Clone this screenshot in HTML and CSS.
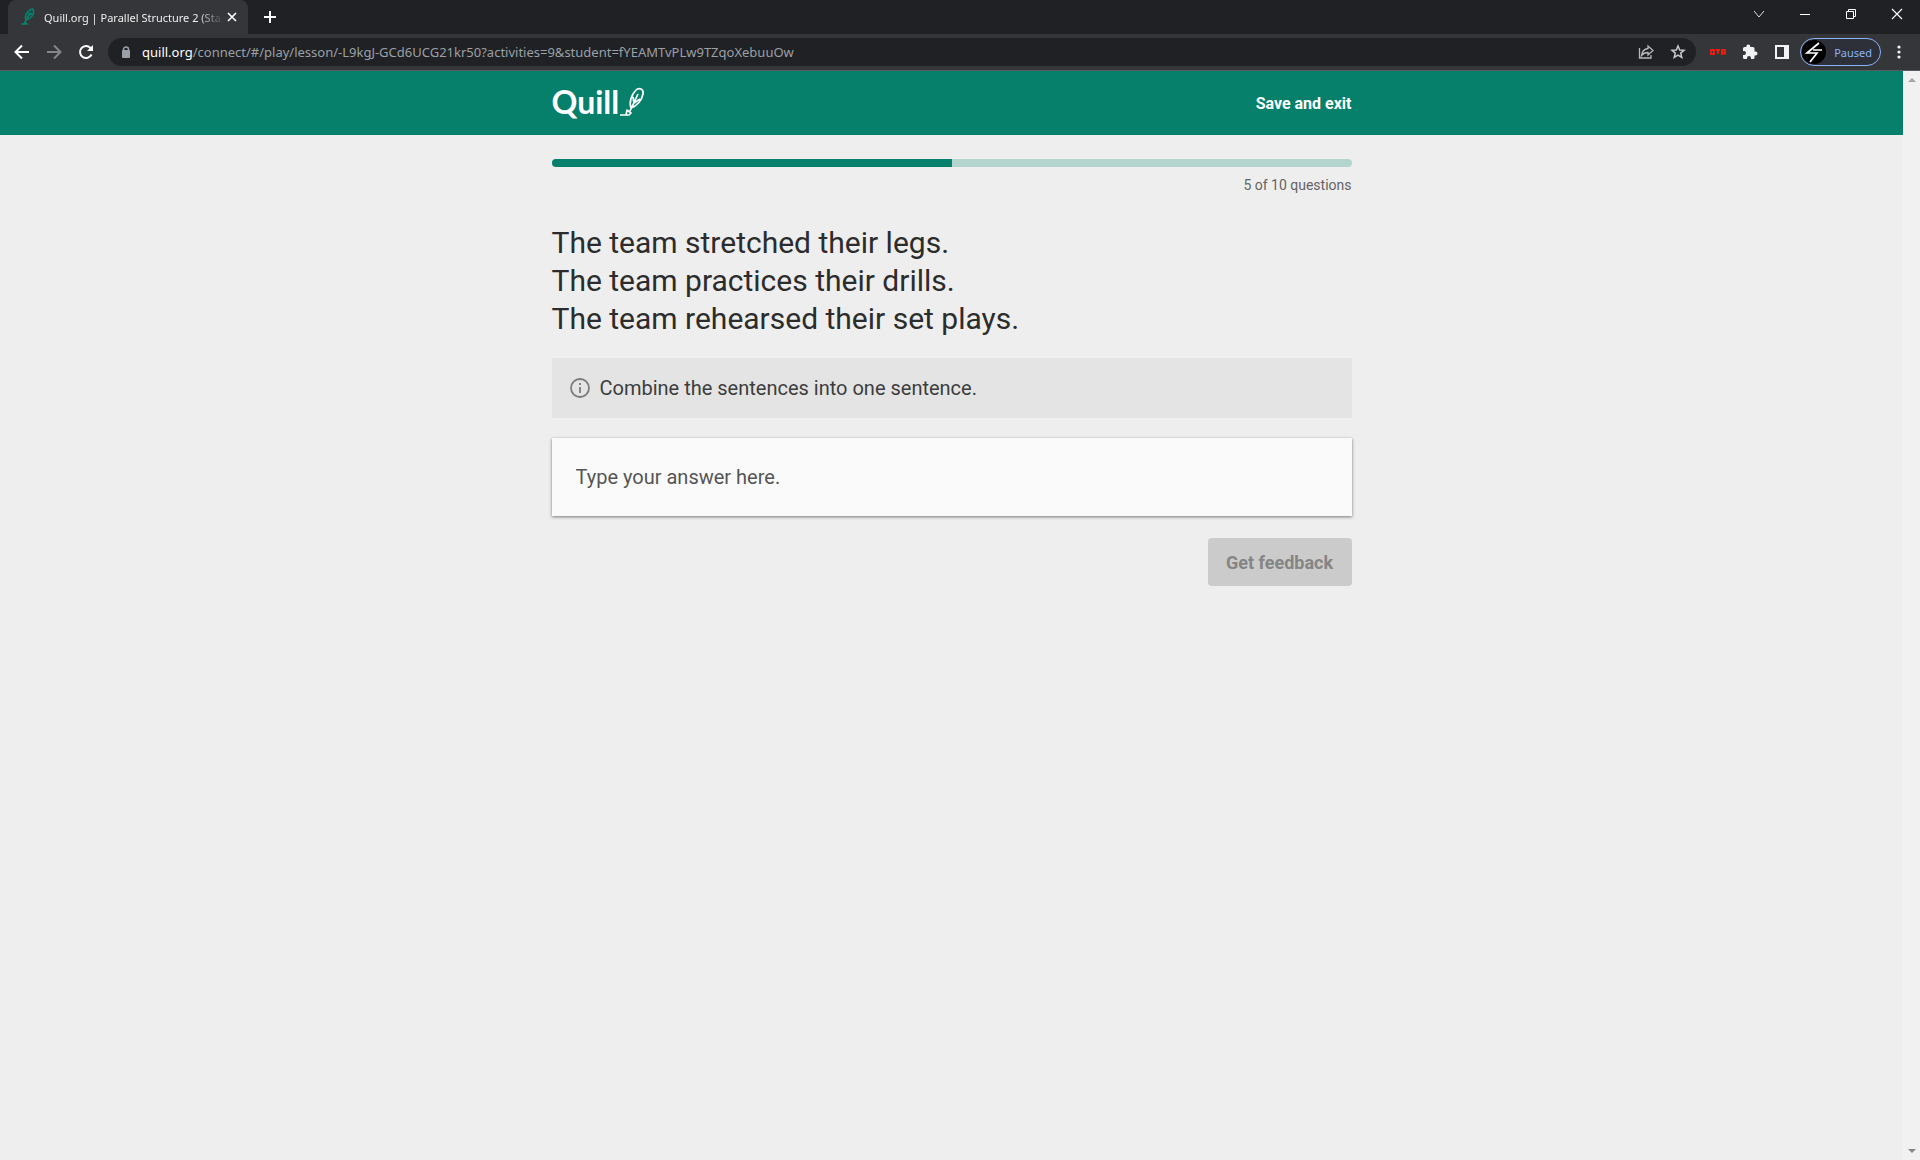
FILE: index.html
```html
<!DOCTYPE html>
<html lang="en">
<head>
	<meta charset="utf-8">
	<meta name="viewport" content="width=device-width, initial-scale=1">
	<title>Quill.org | Parallel Structure 2</title>
	<link rel="stylesheet" href="styles.css">
</head>
<body>
	<div class="tab-strip">
		<div class="tab">
			<svg class="favicon" width="16" height="18" viewBox="0 0 16 18" fill="none" stroke="#08806a" stroke-width="1.5">
				<path d="M6 12C4 8 7 2 13 1C15 6 12 10 6 12ZM11 4L5 14M8 5L9 7L12 6M7 8L8 10M1 16H4L5 14L7 16H4" />
			</svg>
			<span class="tab-title">Quill.org | Parallel Structure 2 (Sta</span>
			<button class="icon-btn tab-close" aria-label="Close tab">
				<svg width="10" height="10" viewBox="0 0 10 10" stroke="#fff" stroke-width="1.700"><path d="M1 1L9 9M9 1L1 9" /></svg>
			</button>
		</div>
		<button class="icon-btn new-tab" aria-label="New tab">
			<svg width="12" height="12" viewBox="0 0 12 12" stroke="#fff" stroke-width="2"><path d="M6 0V12M0 6H12" /></svg>
		</button>
		<div class="window-controls">
			<button class="icon-btn" aria-label="Search tabs">
				<svg width="12" height="12" viewBox="0 0 12 12" fill="none" stroke="#ddd"><path d="M1 3L6 9L11 3" /></svg>
			</button>
			<button class="icon-btn" aria-label="Minimize">
				<svg width="12" height="12" viewBox="0 0 12 12" stroke="#fff"><path d="M1 6.500H11" /></svg>
			</button>
			<button class="icon-btn" aria-label="Restore">
				<svg width="12" height="12" viewBox="0 0 12 12" fill="none" stroke="#fff"><path d="M1.500 3.500H8.500V10.500H1.500ZM3.500 3V1.500H10.500V8.500H9" /></svg>
			</button>
			<button class="icon-btn" aria-label="Close">
				<svg width="12" height="12" viewBox="0 0 12 12" stroke="#fff" stroke-width="1.200"><path d="M1 1L11 11M11 1L1 11" /></svg>
			</button>
		</div>
	</div>

	<div class="toolbar">
		<button class="icon-btn nav-btn" aria-label="Back">
			<svg width="16" height="16" viewBox="0 0 16 16" fill="none" stroke="#fff" stroke-width="2"><path d="M15 8H2M8 1.500L1.500 8L8 14.500" /></svg>
		</button>
		<button class="icon-btn nav-btn" aria-label="Forward">
			<svg width="16" height="16" viewBox="0 0 16 16" fill="none" stroke="#85868a" stroke-width="2"><path d="M1 8H14M8 1.500L14.500 8L8 14.500" /></svg>
		</button>
		<button class="icon-btn nav-btn" aria-label="Reload">
			<svg width="16" height="16" viewBox="0 0 16 16" fill="none" stroke="#fff" stroke-width="2"><path d="M13.500 10.500A6 6 0 1 1 12.500 4L13.500 5.500" /><path d="M15 1V7H9Z" fill="#fff" stroke="none" /></svg>
		</button>
		<div class="address-bar">
			<svg width="10" height="12" viewBox="0 0 10 12" fill="none"><path d="M2.500 5V3.500A2.500 2.500 0 0 1 7.500 3.500V5" stroke="#9aa0a6" stroke-width="1.500" /><rect x="1" y="4" width="8" height="8" rx="1" fill="#9aa0a6" /></svg>
			<span class="url"><b>quill.org</b>/connect/#/play/lesson/-L9kgJ-GCd6UCG21kr50?activities=9&amp;student=fYEAMTvPLw9TZqoXebuuOw</span>
			<button class="icon-btn" aria-label="Share">
				<svg width="16" height="16" viewBox="0 0 16 16" fill="none" stroke="#b5b6b8" stroke-width="1.300"><path d="M1.500 4V14H13V11M10 2L15 6.500L10 11V8.500C7 8.500 5 9.500 3.500 11.500C4 7.500 6.500 5 10 4.500Z" /></svg>
			</button>
			<button class="icon-btn" aria-label="Bookmark this page">
				<svg width="16" height="16" viewBox="0 0 16 16" fill="none" stroke="#c8c9cb" stroke-width="1.500"><path d="M8 2L9.700 6L14 6.300L10.700 9.100L11.800 13.500L8 11.200L4.200 13.500L5.300 9.100L2 6.300L6.300 6Z" /></svg>
			</button>
		</div>
		<div class="extensions">
			<button class="icon-btn" aria-label="Extension">
				<svg width="16" height="6" viewBox="0 0 16 6" fill="none" stroke="#f01c0c" stroke-width="1.800"><path d="M1 1H4V5H1ZM6 1H10M8 1V5M12 6V1H15V6M12 4H15" /></svg>
			</button>
			<button class="icon-btn" aria-label="Extensions">
				<svg width="16" height="16" viewBox="0 0 16 16" fill="#f1f3f4"><path d="M13.500 7.500H12.500V4.500A1.500 1.500 0 0 0 11 3H8.300V2.500A2 2 0 0 0 4.300 2.500V3H2.500A1.500 1.500 0 0 0 1 4.500V7H2A2 2 0 0 1 2 11H1V13.500A1.500 1.500 0 0 0 2.500 15H5V14A2 2 0 0 1 9 14V15H11A1.500 1.500 0 0 0 12.500 13.500V11.500H13.500A2 2 0 0 0 13.500 7.500Z" /></svg>
			</button>
			<button class="icon-btn" aria-label="Side panel">
				<svg width="16" height="16" viewBox="0 0 16 16" fill="none"><path d="M2 2H14V14H2Z" stroke="#f1f3f4" stroke-width="2" /><path d="M10 2H15V14H10Z" fill="#f1f3f4" /></svg>
			</button>
		</div>
		<button class="profile">
			<svg width="24" height="24" viewBox="0 0 24 24"><circle cx="12" cy="12" r="12" fill="#000" /><path d="M17 3L5 13H15L8 22M11 10H20" fill="none" stroke="#fff" stroke-width="1.700" /></svg>
			Paused
		</button>
		<button class="icon-btn menu-btn" aria-label="Menu">
			<svg width="4" height="16" viewBox="0 0 4 16" fill="#f1f3f4"><circle cx="2" cy="3" r="1.600" /><circle cx="2" cy="8" r="1.600" /><circle cx="2" cy="13" r="1.600" /></svg>
		</button>
	</div>

	<div class="viewport">
		<div class="page">
			<header class="header">
				<div class="container header-content">
					<a class="logo" href="#">Quill<svg width="26" height="32" viewBox="0 0 26 32" fill="none" stroke="#fff" stroke-width="1.700" stroke-linejoin="round"><path d="M12 22C10 17 12 9 17 4C20 1 25 3 24 8C23 14 18 20 12 22ZM19 8L11 25M14 11L15 17L21 13M1 29H7L8 24L12 27L10 29L7 29" /></svg></a>
					<a class="save-link" href="#">Save and exit</a>
				</div>
			</header>
			<main class="container">
				<div class="progress" role="progressbar" aria-label="Questions" aria-valuemin="0" aria-valuemax="10" aria-valuenow="5">
					<div class="progress-fill" style="width: 50%"></div>
				</div>
				<p class="progress-text">5 of 10 questions</p>
				<p class="prompt">The team stretched their legs.<br>The team practices their drills.<br>The team rehearsed their set plays.</p>
				<div class="instructions">
					<svg width="20" height="20" viewBox="0 0 20 20" fill="none" stroke="#7c7c7c" stroke-width="1.800"><circle cx="10" cy="10" r="9" /><path d="M10 9V15M10 5V7" /></svg>
					<label for="answer">Combine the sentences into one sentence.</label>
				</div>
				<input class="answer" id="answer" type="text" placeholder="Type your answer here.">
				<div class="actions">
					<button class="feedback-btn" disabled>Get feedback</button>
				</div>
			</main>
		</div>
		<div class="scrollbar">
			<svg width="8" height="4" viewBox="0 0 8 4" fill="#a3a3a3"><path d="M0 4L4 0L8 4Z" /></svg>
			<svg width="8" height="4" viewBox="0 0 8 4" fill="#858585"><path d="M0 0L4 4L8 0Z" /></svg>
		</div>
	</div>
</body>
</html>
```
FILE: styles.css
```css
* {
	box-sizing: border-box;
}

body {
	display: flex;
	flex-direction: column;
	min-height: 100vh;
	margin: 0;
	background-color: #eee;
	color: #2c2c2c;
	font-family: Roboto, sans-serif;
}

p {
	margin: 0;
}

a {
	color: inherit;
	text-decoration: none;
}

svg {
	display: block;
	flex: none;
}

.icon-btn {
	display: flex;
	align-items: center;
	justify-content: center;
	padding: 0;
	border: 0;
	background: none;
}

/* browser frame */
.tab-strip {
	display: flex;
	height: 34px;
	padding-left: 8px;
	background-color: #202124;
}

.tab {
	display: flex;
	align-items: center;
	width: 240px;
	padding: 0 8px 0 12px;
	border-radius: 8px 8px 0 0;
	background-color: #35363a;
	color: #eee;
	font-family: "Noto Sans", sans-serif;
	font-size: 11px;
}

.tab-title {
	flex: 1;
	margin-left: 8px;
	white-space: nowrap;
	mask-image: linear-gradient(to right, #000 85%, transparent);
}

.tab-close {
	width: 16px;
}

.new-tab {
	width: 44px;
}

.window-controls {
	display: flex;
	margin-left: auto;
}

.window-controls .icon-btn {
	width: 46px;
	height: 28px;
}

.toolbar {
	display: flex;
	align-items: center;
	height: 37px;
	padding: 0 11px 0 6px;
	border-bottom: 1px solid #5a5b5e;
	background-color: #35363a;
	font-family: "Noto Sans", sans-serif;
}

.nav-btn {
	width: 32px;
}

.address-bar {
	display: flex;
	flex: 1;
	align-items: center;
	gap: 16px;
	height: 28px;
	margin-left: 6px;
	padding: 0 10px 0 13px;
	border-radius: 14px;
	background-color: #202124;
	color: #9aa0a6;
	font-size: 13px;
}

.url {
	flex: 1;
	margin-left: -5px;
}

.url b {
	color: #fff;
	font-weight: 400;
}

.extensions {
	display: flex;
	gap: 16px;
	margin: 0 10px 0 14px;
}

.profile {
	display: flex;
	align-items: center;
	gap: 8px;
	height: 28px;
	padding: 0 8px 0 1px;
	border: 1px solid #8ab4f8;
	border-radius: 14px;
	background-color: #2d2f39;
	color: #8ab4f8;
	font-family: inherit;
	font-size: 11px;
}

.menu-btn {
	width: 20px;
	margin-left: 8px;
}

/* page */
.viewport {
	display: flex;
	flex: 1;
}

.page {
	flex: 1;
}

.container {
	max-width: 800px;
	margin: 0 auto;
}

.header {
	background-color: #06806b;
	color: #fff;
}

.header-content {
	display: flex;
	align-items: center;
	justify-content: space-between;
	height: 64px;
}

.logo {
	display: flex;
	align-items: center;
	padding-bottom: 3px;
	font-family: Lato, sans-serif;
	font-size: 32px;
	font-weight: 700;
}

.save-link {
	font-size: 16px;
	font-weight: 700;
}

.progress {
	height: 8px;
	margin-top: 24px;
	overflow: hidden;
	border-radius: 4px;
	background-color: #b4d5ce;
}

.progress-fill {
	height: 100%;
	background-color: #06806b;
}

.progress-text {
	margin-top: 8px;
	color: #646464;
	font-size: 14px;
	line-height: 20px;
	text-align: right;
}

.prompt {
	margin: 29px 0 20px;
	font-size: 30px;
	line-height: 38px;
}

.instructions {
	display: flex;
	align-items: center;
	gap: 10px;
	padding: 16px 18px;
	background-color: #e4e4e4;
	color: #3d3d3d;
	font-size: 20px;
	line-height: 28px;
}

.answer {
	display: block;
	width: 100%;
	height: 78px;
	margin: 20px 0 22px;
	padding: 0 24px;
	border: 0;
	background-color: #fafafa;
	box-shadow: 0 1px 3px rgba(0, 0, 0, 0.5);
	font-family: inherit;
	font-size: 20px;
}

.answer::placeholder {
	color: #555;
}

.actions {
	display: flex;
	justify-content: flex-end;
}

.feedback-btn {
	min-width: 144px;
	height: 48px;
	padding: 0 16px;
	border: 0;
	border-radius: 4px;
	background-color: #cbcbcb;
	color: #858585;
	font-family: inherit;
	font-size: 18px;
	font-weight: 700;
}

.scrollbar {
	display: flex;
	flex-direction: column;
	align-items: center;
	justify-content: space-between;
	width: 17px;
	padding: 7px 0;
	background-color: #f1f1f1;
}
```
